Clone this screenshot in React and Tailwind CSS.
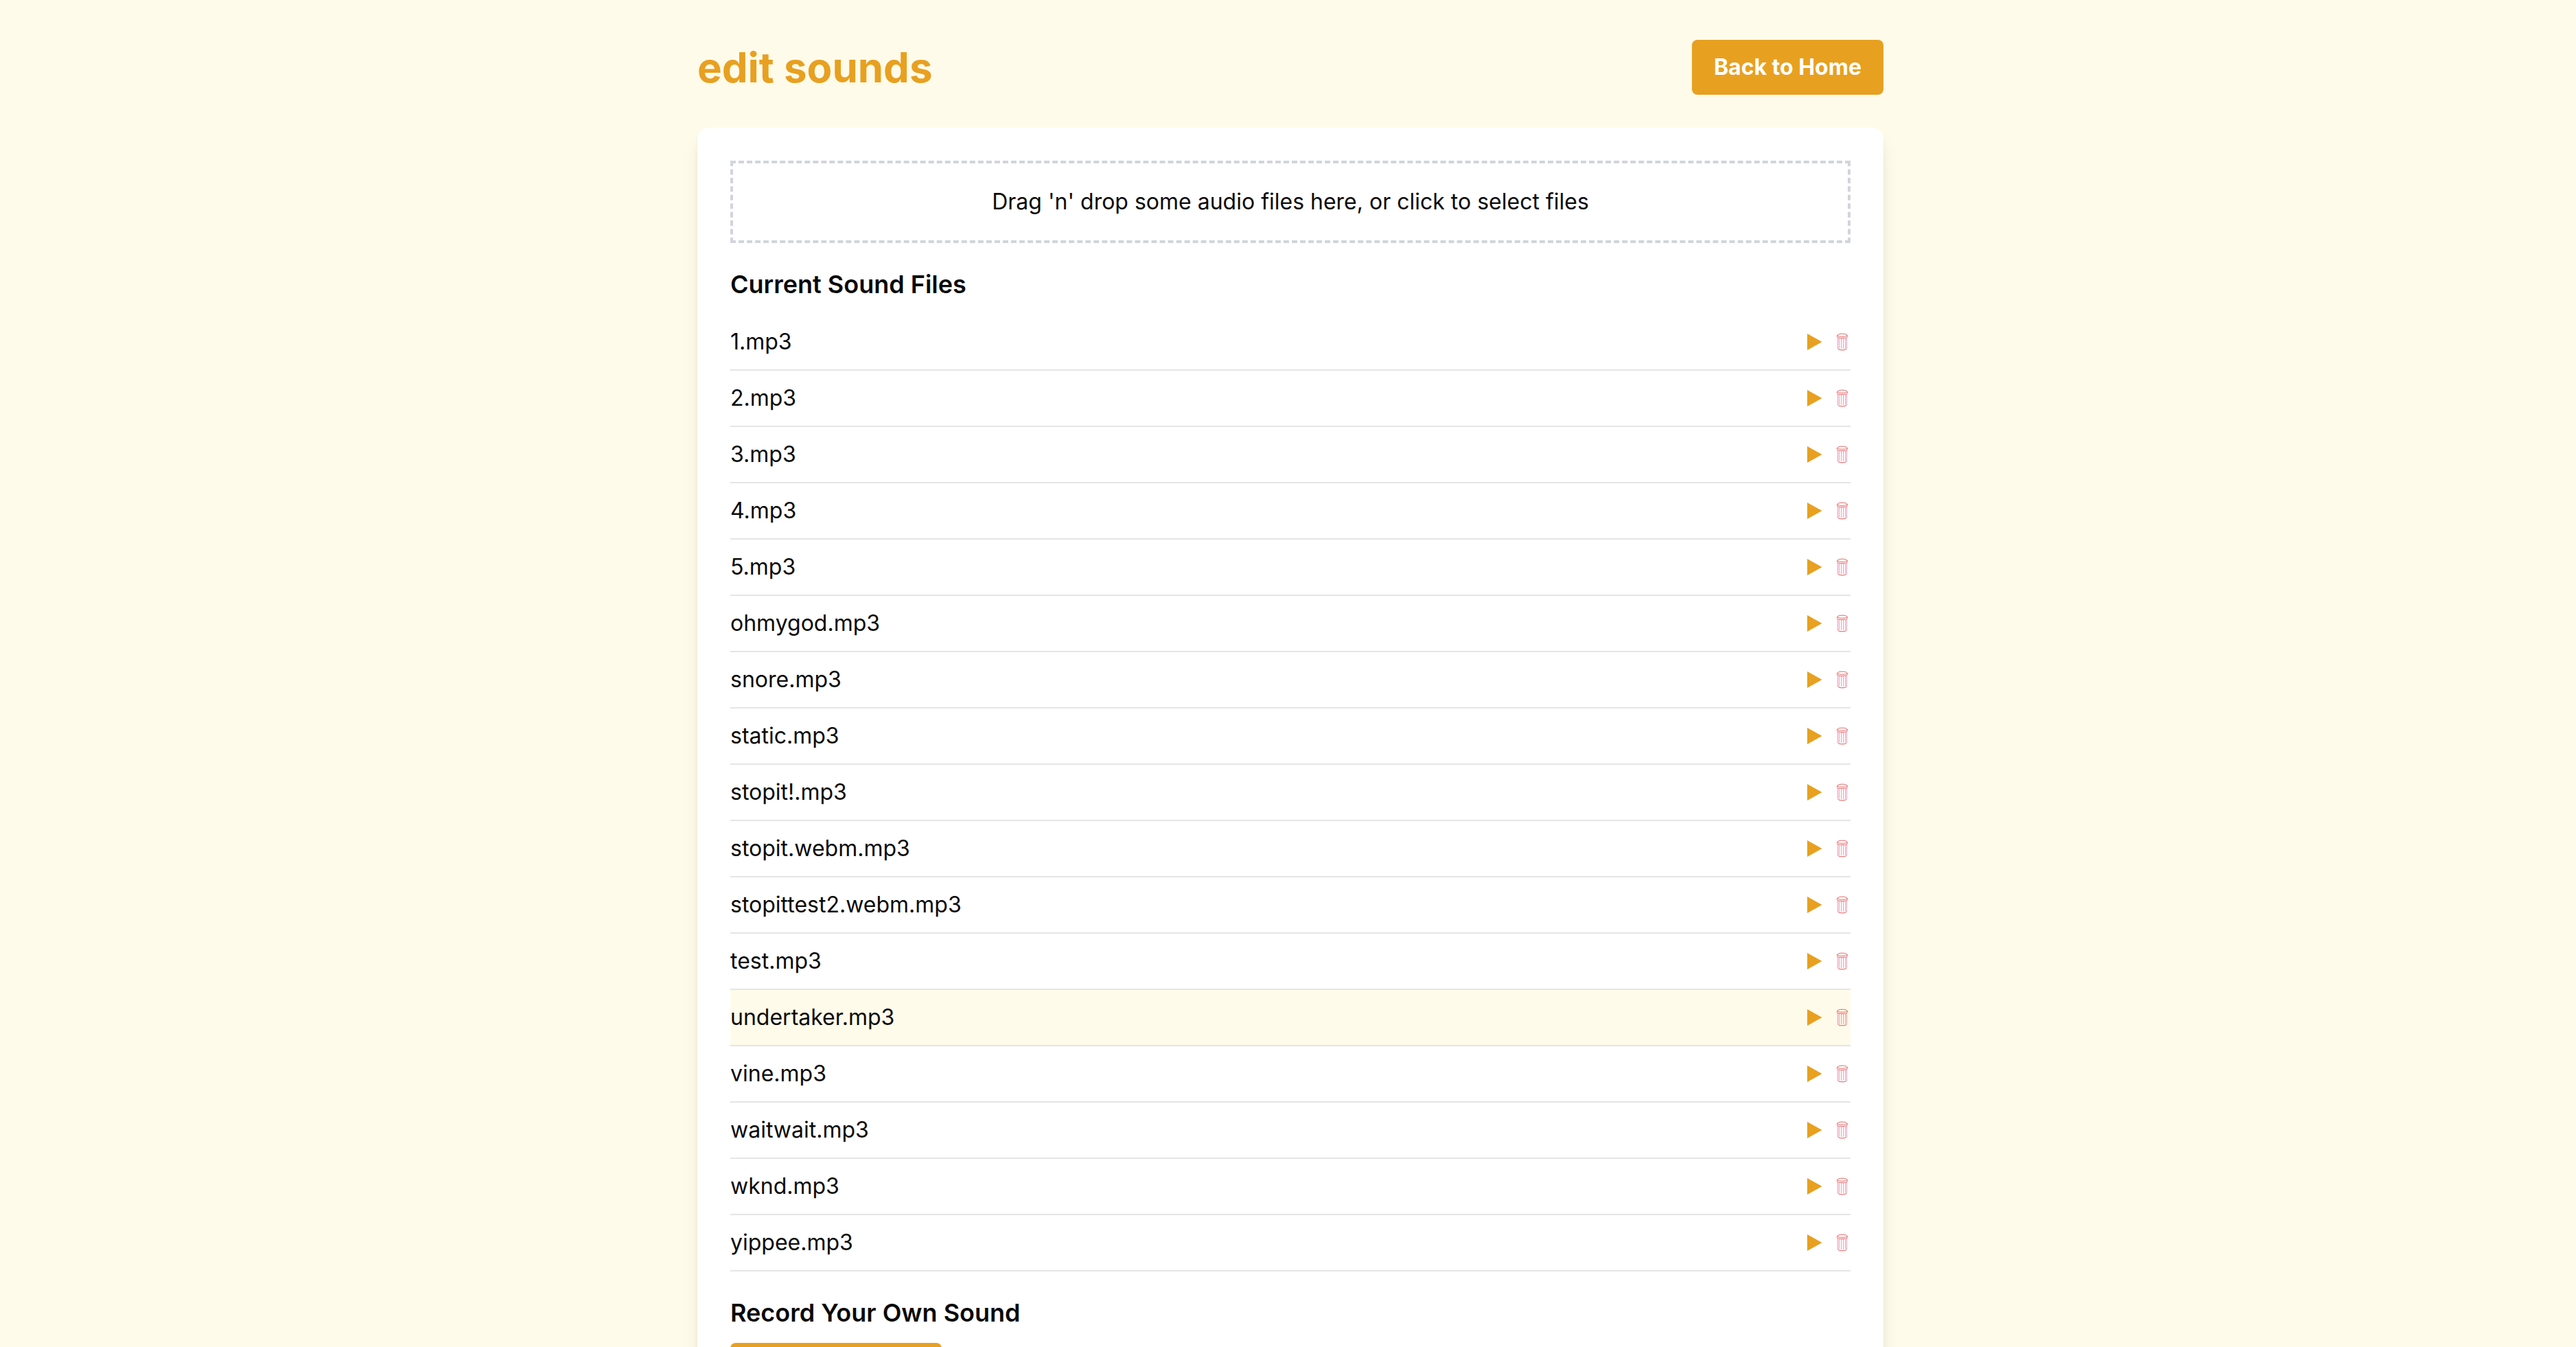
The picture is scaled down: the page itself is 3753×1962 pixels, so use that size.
const files = [
  "1.mp3", "2.mp3", "3.mp3", "4.mp3", "5.mp3", "ohmygod.mp3", "snore.mp3", "static.mp3",
  "stopit!.mp3", "stopit.webm.mp3", "stopittest2.webm.mp3", "test.mp3", "undertaker.mp3",
  "vine.mp3", "waitwait.mp3", "wknd.mp3", "yippee.mp3",
];
const active = "undertaker.mp3";

function PlayIcon() {
  return (
    <svg width="22" height="24" viewBox="0 0 22 24" fill="currentColor" aria-hidden="true">
      <path d="M0 0 L21.5 12 L0 24 Z" />
    </svg>
  );
}

function TrashIcon() {
  return (
    <svg width="16" height="26" viewBox="0 0 16 26" fill="none" stroke="currentColor" aria-hidden="true">
      <path d="M0.5 4.2C0.5 0.2 15.5 0.2 15.5 4.2V5.6C15.5 8.2 0.5 8.2 0.5 5.6Z" strokeWidth="0.7" />
      <path d="M1 3.8C3.5 5.9 12.5 5.9 15 3.8" strokeWidth="0.7" />
      <path d="M1.5 22.6C2.4 25.6 13.6 25.6 14.5 22.6" strokeWidth="0.8" />
      <g stroke="#d9508f" strokeWidth="0.6">
        <path d="M1.5 7V22.6M14.5 7V22.6" />
        <path d="M3.5 8V22.5M6.5 8V22.8M9.5 8V22.8M12.5 8V22.5" />
      </g>
    </svg>
  );
}

function SoundRow({ name }) {
  return (
    <li className={`flex items-center justify-between border-b-2 border-[#e5e5e5] py-4 ${name === active ? "bg-[#fffbea]" : ""}`}>
      <span>{name}</span>
      <span className="flex items-center gap-[21px] pr-1">
        <button type="button" aria-label={`Play ${name}`} className="text-[#e8a020]"><PlayIcon /></button>
        <button type="button" aria-label={`Delete ${name}`} className="text-[#dc2626]"><TrashIcon /></button>
      </span>
    </li>
  );
}

export default function App() {
  return (
    <div className="min-h-screen bg-[#fffbea] pl-[7px] font-['Inter',sans-serif] text-[32px] leading-[48px] text-[#0a0a0a]">
      <main className="mx-auto max-w-[1792px] px-8 pt-[58px]">
        <header className="mb-12 flex items-center justify-between">
          <h1 className="text-[60px] leading-[72px] font-bold text-[#e8a020]">edit sounds</h1>
          <a href="#home" className="flex h-20 items-center rounded-lg bg-[#e8a020] px-8 font-bold text-white">Back to Home</a>
        </header>
        <section className="rounded-2xl bg-white p-12 shadow-[0_20px_30px_-6px_rgb(0_0_0/0.1),0_8px_12px_-4px_rgb(0_0_0/0.1)]">
          <button type="button" className="mb-8 flex h-30 w-full items-center justify-center border-4 border-dashed border-[#d1d5db]">
            Drag 'n' drop some audio files here, or click to select files
          </button>
          <h2 className="mb-4 text-[36px] leading-[56px] font-semibold">Current Sound Files</h2>
          <ul className="mb-8">
            {files.map((name) => <SoundRow key={name} name={name} />)}
          </ul>
          <h2 className="mb-4 text-[36px] leading-[56px] font-semibold">Record Your Own Sound</h2>
          <button type="button" className="flex h-20 items-center rounded-lg bg-[#e8a020] px-8 font-bold text-white">Start Recording</button>
        </section>
      </main>
    </div>
  );
}
